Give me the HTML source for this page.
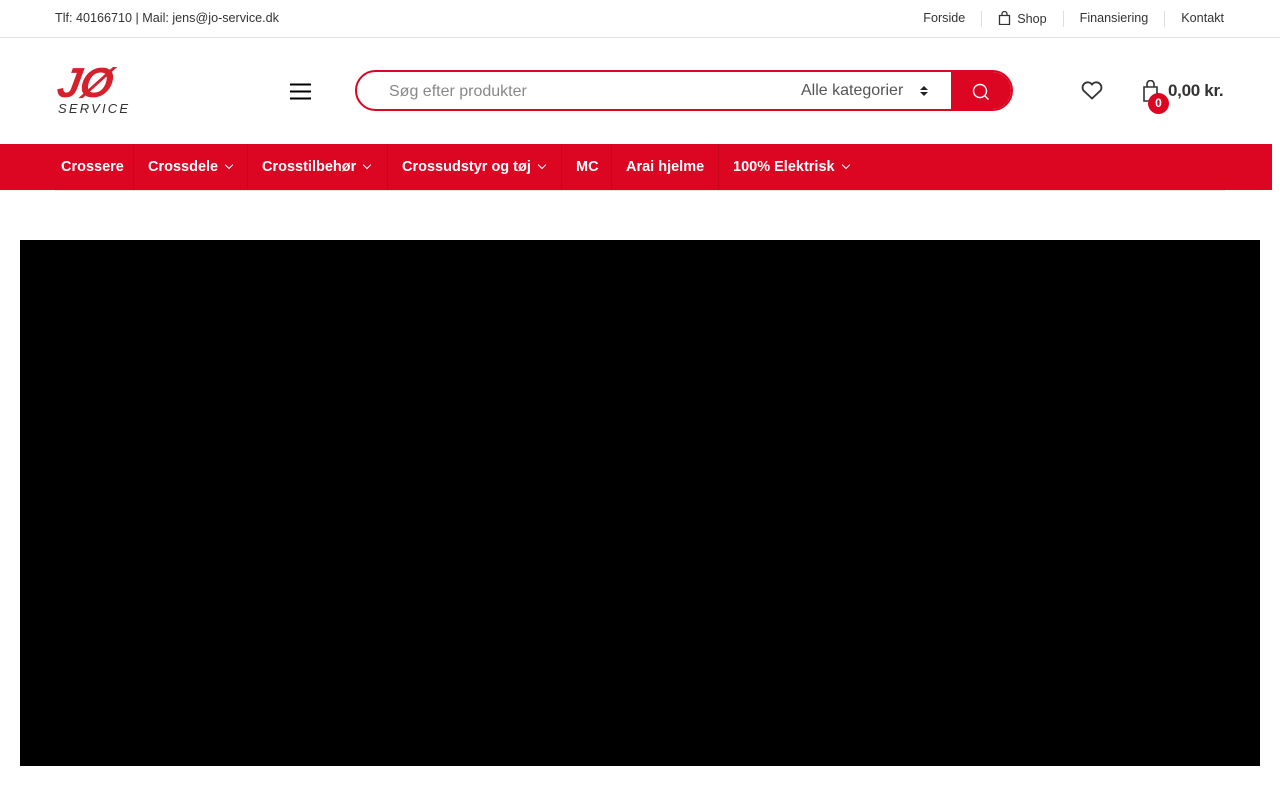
<!DOCTYPE html>
<html><head><meta charset="utf-8"><style>
*{margin:0;padding:0;box-sizing:border-box}
body{width:1280px;height:800px;background:#fff;font-family:"Liberation Sans",sans-serif;color:#333;position:relative;overflow:hidden}
.top{height:38px;border-bottom:1px solid #e2e2e2;font-size:12.6px;color:#333;position:relative}
.top .l{position:absolute;left:55px;top:11px}
.top .r{position:absolute;right:56px;top:11px;display:flex}
.top .r span{padding:0 16px;border-left:1px solid #ddd;line-height:15px}
.top .r span:first-child{border:none}
.top .r span:last-child{padding-right:0}
.abs{position:absolute}
.search{left:355px;top:70px;width:658px;height:41px;border:2px solid #dc0522;border-radius:21px;overflow:hidden}
.nav{left:0;top:144px;width:1272px;height:46px;background:#dc0522;display:flex;padding-left:47px}
.nav div{color:#fff;font-weight:bold;font-size:14.5px;line-height:46px;padding-left:14px;border-right:1px solid #c8041f;white-space:nowrap}
.nav div:last-child{border:none}
.car{display:inline-block;width:6px;height:6px;border-right:1.5px solid #fff;border-bottom:1.5px solid #fff;transform:rotate(45deg);margin-left:8px;vertical-align:3px}
</style></head><body>
<div class="top"><div class="l">Tlf: 40166710 | Mail: jens@jo-service.dk</div>
<div class="r"><span>Forside</span><span><svg width="13" height="14" viewBox="0 0 13 14" style="vertical-align:-2px;margin-right:6px"><path d="M1.5 4.5h10v9h-10z M4 4.5V3a2.5 2.5 0 0 1 5 0v1.5" fill="none" stroke="#333" stroke-width="1.3"/></svg>Shop</span><span>Finansiering</span><span>Kontakt</span></div></div>

<div class="abs" style="left:58px;top:64px;width:75px">
<div style="font:italic bold 42px/38px 'Liberation Sans',sans-serif;color:#d6202b;letter-spacing:-1px;transform:skewX(-10deg)">JØ</div>
<div style="font:italic 13px/14px 'Liberation Sans',sans-serif;color:#333;letter-spacing:2.2px;margin-top:0px">SERVICE</div></div>

<svg class="abs" style="left:290px;top:83px" width="21" height="17"><path d="M0 1.5h21M0 8.5h21M0 15.5h21" stroke="#000" stroke-width="2"/></svg>

<div class="abs search">
<div class="abs" style="left:32px;top:11px;font-size:16px;color:#888">Søg efter produkter</div>
<div class="abs" style="left:444px;top:10px;font-size:16px;color:#555">Alle kategorier</div>
<svg class="abs" style="left:563px;top:13px" width="8" height="12"><path d="M0 5l4-4 4 4zM0 7l4 4 4-4z" fill="#222"/></svg>
<div class="abs" style="left:594px;top:-2px;width:62px;height:41px;background:#dc0522"></div>
<svg class="abs" style="left:614px;top:10px" width="20" height="20"><circle cx="9" cy="9" r="6.5" fill="none" stroke="#fff" stroke-width="1.4"/><path d="M13.5 13.5l4 4" stroke="#fff" stroke-width="1.5"/></svg>
</div>

<svg class="abs" style="left:1081px;top:80px" width="22" height="20"><path d="M11 18.5L2.5 10.5a4.8 4.8 0 0 1 8.5-6a4.8 4.8 0 0 1 8.5 6z" fill="none" stroke="#333" stroke-width="1.8"/></svg>
<svg class="abs" style="left:1143px;top:80px" width="18" height="22"><path d="M1 7h13v14H1z M4 7V4a3.5 3.5 0 0 1 7 0v3" fill="none" stroke="#333" stroke-width="1.6"/></svg>
<div class="abs" style="left:1148px;top:93px;width:21px;height:21px;border-radius:50%;background:#dc0522;color:#fff;font-size:12px;font-weight:bold;text-align:center;line-height:21px">0</div>
<div class="abs" style="left:1168px;top:81px;font-size:17px;font-weight:bold;color:#333;letter-spacing:-0.3px">0,00 kr.</div>

<div class="abs nav">
<div style="width:87px">Crossere</div><div style="width:114px">Crossdele<span class="car"></span></div><div style="width:140px">Crosstilbehør<span class="car"></span></div><div style="width:174px">Crossudstyr og tøj<span class="car"></span></div><div style="width:50px">MC</div><div style="width:107px">Arai hjelme</div><div style="width:140px">100% Elektrisk<span class="car"></span></div>
</div>
<div class="abs" style="left:55px;top:190px;width:1170px;height:1px;background:#e6e6e6"></div>

<div class="abs" style="left:20px;top:240px;width:1240px;height:526px;background:#000"></div>
</body></html>
